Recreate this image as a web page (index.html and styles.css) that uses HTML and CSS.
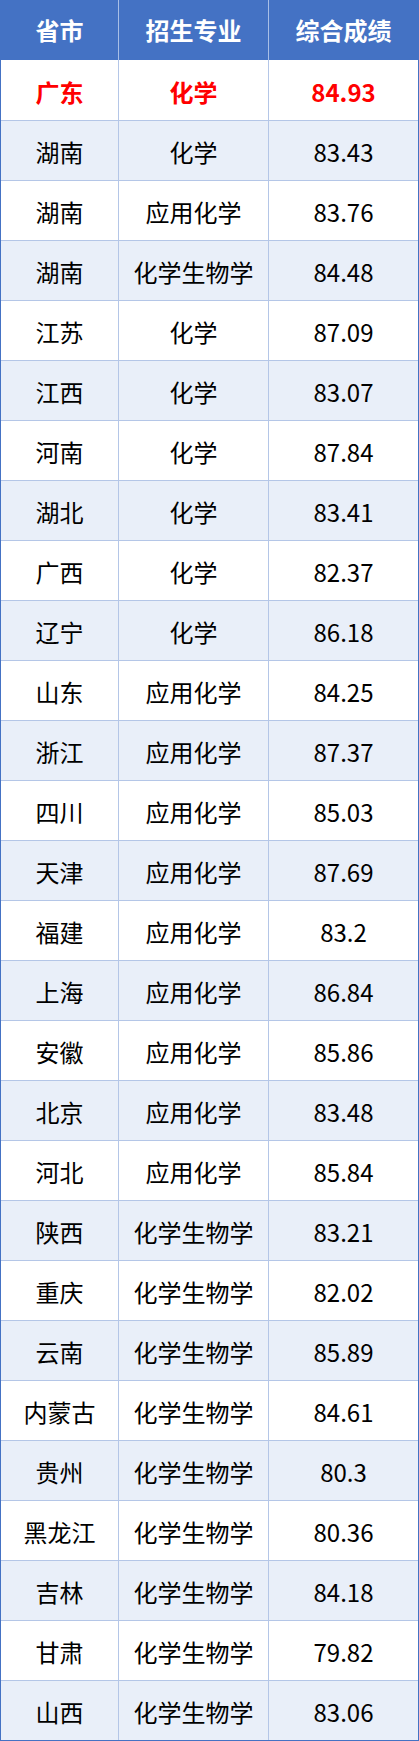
FILE: index.html
```html
<!DOCTYPE html>
<html lang="zh-CN">
<head>
<meta charset="utf-8">
<title>成绩表</title>
<link rel="stylesheet" href="styles.css">
</head>
<body>
<div class="table">
  <div class="row head"><div class="cell">省市</div><div class="cell">招生专业</div><div class="cell">综合成绩</div></div>
  <div class="row hl"><div class="cell">广东</div><div class="cell">化学</div><div class="cell">84.93</div></div>
  <div class="row"><div class="cell">湖南</div><div class="cell">化学</div><div class="cell">83.43</div></div>
  <div class="row"><div class="cell">湖南</div><div class="cell">应用化学</div><div class="cell">83.76</div></div>
  <div class="row"><div class="cell">湖南</div><div class="cell">化学生物学</div><div class="cell">84.48</div></div>
  <div class="row"><div class="cell">江苏</div><div class="cell">化学</div><div class="cell">87.09</div></div>
  <div class="row"><div class="cell">江西</div><div class="cell">化学</div><div class="cell">83.07</div></div>
  <div class="row"><div class="cell">河南</div><div class="cell">化学</div><div class="cell">87.84</div></div>
  <div class="row"><div class="cell">湖北</div><div class="cell">化学</div><div class="cell">83.41</div></div>
  <div class="row"><div class="cell">广西</div><div class="cell">化学</div><div class="cell">82.37</div></div>
  <div class="row"><div class="cell">辽宁</div><div class="cell">化学</div><div class="cell">86.18</div></div>
  <div class="row"><div class="cell">山东</div><div class="cell">应用化学</div><div class="cell">84.25</div></div>
  <div class="row"><div class="cell">浙江</div><div class="cell">应用化学</div><div class="cell">87.37</div></div>
  <div class="row"><div class="cell">四川</div><div class="cell">应用化学</div><div class="cell">85.03</div></div>
  <div class="row"><div class="cell">天津</div><div class="cell">应用化学</div><div class="cell">87.69</div></div>
  <div class="row"><div class="cell">福建</div><div class="cell">应用化学</div><div class="cell">83.2</div></div>
  <div class="row"><div class="cell">上海</div><div class="cell">应用化学</div><div class="cell">86.84</div></div>
  <div class="row"><div class="cell">安徽</div><div class="cell">应用化学</div><div class="cell">85.86</div></div>
  <div class="row"><div class="cell">北京</div><div class="cell">应用化学</div><div class="cell">83.48</div></div>
  <div class="row"><div class="cell">河北</div><div class="cell">应用化学</div><div class="cell">85.84</div></div>
  <div class="row"><div class="cell">陕西</div><div class="cell">化学生物学</div><div class="cell">83.21</div></div>
  <div class="row"><div class="cell">重庆</div><div class="cell">化学生物学</div><div class="cell">82.02</div></div>
  <div class="row"><div class="cell">云南</div><div class="cell">化学生物学</div><div class="cell">85.89</div></div>
  <div class="row"><div class="cell">内蒙古</div><div class="cell">化学生物学</div><div class="cell">84.61</div></div>
  <div class="row"><div class="cell">贵州</div><div class="cell">化学生物学</div><div class="cell">80.3</div></div>
  <div class="row"><div class="cell">黑龙江</div><div class="cell">化学生物学</div><div class="cell">80.36</div></div>
  <div class="row"><div class="cell">吉林</div><div class="cell">化学生物学</div><div class="cell">84.18</div></div>
  <div class="row"><div class="cell">甘肃</div><div class="cell">化学生物学</div><div class="cell">79.82</div></div>
  <div class="row"><div class="cell">山西</div><div class="cell">化学生物学</div><div class="cell">83.06</div></div>
</div>
</body>
</html>
```
FILE: styles.css
```css
* { box-sizing: border-box; }
body {
  margin: 0;
  background: #ffffff;
  font-family: "Noto Sans CJK SC", "Noto Sans", sans-serif;
  color: #000;
}
.table {
  width: 419px;
  border-left: 1px solid #4472c4;
  border-right: 1px solid #4472c4;
  border-bottom: 1px solid #4472c4;
}
.row {
  display: grid;
  grid-template-columns: 118px 150px 149px;
  height: 60px;
  border-top: 1px solid #b4c6e7;
  background: #ffffff;
}
.row:nth-child(odd) { background: #e9eff9; }
.row.head {
  border-top: 0;
  background: #4472c4;
  color: #ffffff;
  font-weight: 700;
}
.row.hl {
  border-top: 0;
  background: #ffffff;
  color: #ff0000;
  font-weight: 700;
}
.cell {
  display: flex;
  align-items: center;
  justify-content: center;
  font-size: 24px;
  line-height: 1;
  padding-top: 3px;
  border-right: 1px solid #b4c6e7;
}
.cell:last-child { border-right: 0; }
.head .cell { border-right-color: #a9bfe6; padding-top: 0; }
.head .cell:last-child { border-right: 0; }
```
